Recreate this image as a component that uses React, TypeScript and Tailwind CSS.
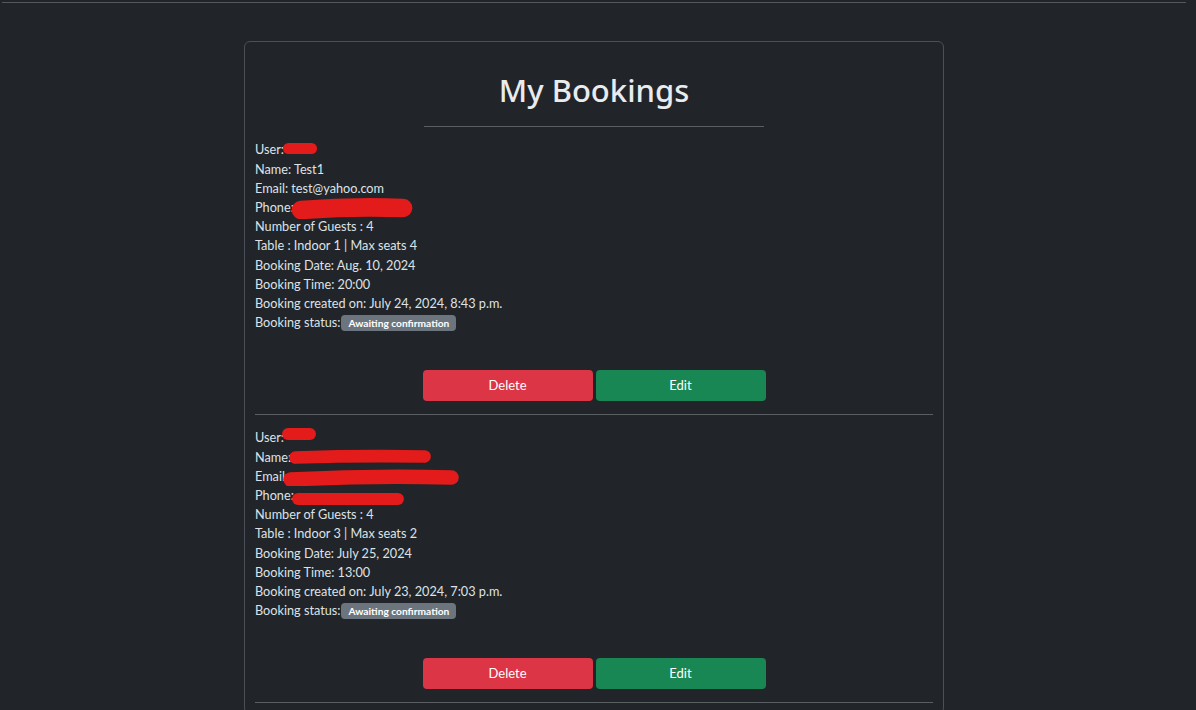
import React from "react";

const font = { fontFamily: 'Lato, "Noto Sans", "Liberation Sans", sans-serif' };
const titleFont = { fontFamily: '"Noto Sans", "Liberation Sans", sans-serif' };

function Blob({ w, h, dy = 0, dx = 0, tilt = 0 }: { w: number; h: number; dy?: number; dx?: number; tilt?: number }) {
  return (
    <span className="relative inline-block align-baseline" style={{ width: 0 }}>
      <svg
        className="absolute"
        width={w}
        height={h}
        viewBox={`0 0 ${w} ${h}`}
        style={{ left: dx, top: dy }}
      >
        <path
          d={`M ${h / 2} ${h / 2 + tilt} Q ${w / 2} ${h / 2 - tilt} ${w - h / 2} ${h / 2}`}
          stroke="#e31b1b"
          strokeWidth={h * 0.85}
          strokeLinecap="round"
          fill="none"
        />
      </svg>
    </span>
  );
}

type Booking = {
  user: React.ReactNode;
  name: React.ReactNode;
  email: React.ReactNode;
  phone: React.ReactNode;
  guests: string;
  table: string;
  date: string;
  time: string;
  created: string;
};

const bookings: Booking[] = [
  {
    user: <Blob w={36} h={13} dx={-2} dy={-12} />,
    name: " Test1",
    email: " test@yahoo.com",
    phone: <Blob w={124} h={22} dx={-4} dy={-15} tilt={2} />,
    guests: "4",
    table: "Indoor 1 | Max seats 4",
    date: "Aug. 10, 2024",
    time: "20:00",
    created: "July 24, 2024, 8:43 p.m.",
  },
  {
    user: <Blob w={36} h={14} dx={-3} dy={-15} />,
    name: <Blob w={144} h={15} dx={-3} dy={-13} tilt={1} />,
    email: <Blob w={178} h={17} dx={-6} dy={-12} tilt={2} />,
    phone: <Blob w={114} h={14} dx={-3} dy={-8} />,
    guests: "4",
    table: "Indoor 3 | Max seats 2",
    date: "July 25, 2024",
    time: "13:00",
    created: "July 23, 2024, 7:03 p.m.",
  },
];

function BookingItem({ b }: { b: Booking }) {
  return (
    <div>
      <div className="text-[12.7px] leading-[19.2px] mt-[13px]">
        <div>User:{b.user}</div>
        <div>Name:{b.name}</div>
        <div>Email:{b.email}</div>
        <div>Phone:{b.phone}</div>
        <div>Number of Guests : {b.guests}</div>
        <div>Table : {b.table}</div>
        <div>Booking Date: {b.date}</div>
        <div>Booking Time: {b.time}</div>
        <div>Booking created on: {b.created}</div>
        <div className="flex items-center">
          Booking status:
          <span className="ml-[1px] inline-flex items-center h-[16px] px-[7px] rounded-[4px] bg-[#6c757d] text-white text-[10.2px] font-bold leading-none">
            Awaiting confirmation
          </span>
        </div>
      </div>
      <div className="mt-[38px] flex justify-center gap-[3px]">
        <button className="w-[170px] h-[31px] rounded-[4px] bg-[#dc3545] text-white text-[13px]">Delete</button>
        <button className="w-[170px] h-[31px] rounded-[4px] bg-[#198754] text-white text-[13px]">Edit</button>
      </div>
      <div className="mt-[13px] border-t border-[#5a5f64]" />
    </div>
  );
}

export default function App() {
  return (
    <div className="min-h-screen bg-[#212529] text-[#dee2e6] pt-[2px]" style={font}>
      <div className="ml-[2px] mr-[10px] border-t border-[#53585d]" />
      <div className="mt-[38px] w-[700px] border border-[#495057] rounded-[6px] px-[10px] pb-[10px] ml-[244px]">
        <h1 className="text-center text-[31px] font-medium leading-[38.4px] mt-[29px] text-[#e9ecef]" style={titleFont}>My Bookings</h1>
        <div className="mx-auto mt-[17px] w-[340px] border-t border-[#5a5f64]" />
        {bookings.map((b, i) => (
          <BookingItem key={i} b={b} />
        ))}
      </div>
    </div>
  );
}
